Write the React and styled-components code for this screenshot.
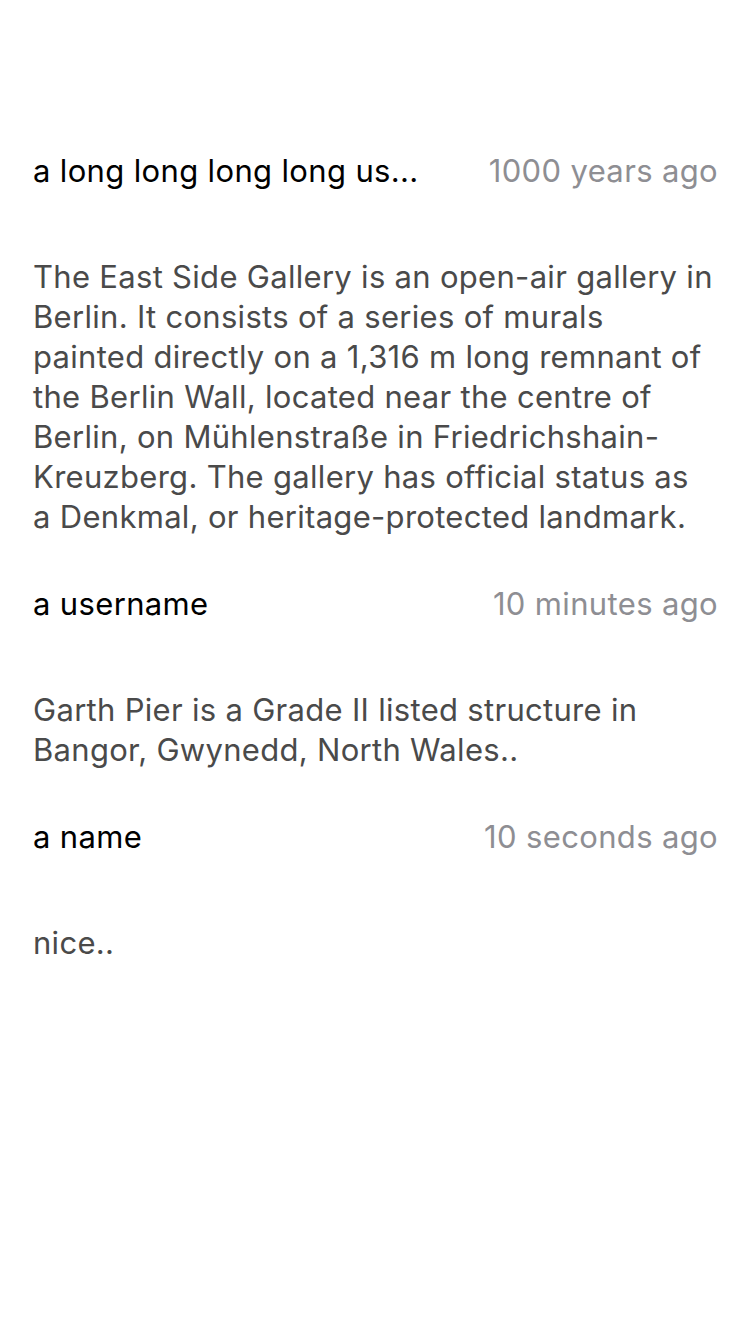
import React from 'react';
import styled, { createGlobalStyle } from 'styled-components';

const comments = [
  {
    id: 1,
    author: 'a long long long long us...',
    time: '1000 years ago',
    body:
      'The East Side Gallery is an open-air gallery in Berlin. It consists of a series of murals painted directly on a 1,316 m long remnant of the Berlin Wall, located near the centre of Berlin, on Mühlenstraße in Friedrichshain-Kreuzberg. The gallery has official status as a Denkmal, or heritage-protected landmark.',
  },
  {
    id: 2,
    author: 'a username',
    time: '10 minutes ago',
    body: 'Garth Pier is a Grade II listed structure in Bangor, Gwynedd, North Wales..',
  },
  {
    id: 3,
    author: 'a name',
    time: '10 seconds ago',
    body: 'nice..',
  },
];

const App = () => {
  return (
    <>
      <GlobalStyle />
      <Page>
        <CommentList>
          {comments.map((c) => (
            <Comment key={c.id}>
              <CommentHeader>
                <Author>{c.author}</Author>
                <Time>{c.time}</Time>
              </CommentHeader>
              <Body>{c.body}</Body>
            </Comment>
          ))}
        </CommentList>
      </Page>
    </>
  );
};

export default App;

const GlobalStyle = createGlobalStyle`
  html, body {
    margin: 0;
    padding: 0;
    background: #ffffff;
  }
  body {
    font-family: Inter, 'Noto Sans', sans-serif;
    -webkit-font-smoothing: antialiased;
  }
`;

const Page = styled.div`
  width: 750px;
  min-height: 1334px;
  background: #ffffff;
  box-sizing: border-box;
  padding: 151px 32px 0 33px;
`;

const CommentList = styled.div`
  display: flex;
  flex-direction: column;
  gap: 47px;
`;

const Comment = styled.div`
  display: flex;
  flex-direction: column;
  gap: 66px;
`;

const CommentHeader = styled.div`
  display: flex;
  justify-content: space-between;
  align-items: center;
  gap: 24px;
  font-size: 31px;
  line-height: 40px;
  letter-spacing: 0.35px;
`;

const Author = styled.div`
  color: #000000;
  white-space: nowrap;
  overflow: hidden;
  text-overflow: ellipsis;
`;

const Time = styled.div`
  color: #8e8e93;
  white-space: nowrap;
  flex-shrink: 0;
`;

const Body = styled.div`
  color: #4a4a4a;
  font-size: 31px;
  line-height: 40px;
  letter-spacing: 0.3px;
  padding-right: 5px;
`;
